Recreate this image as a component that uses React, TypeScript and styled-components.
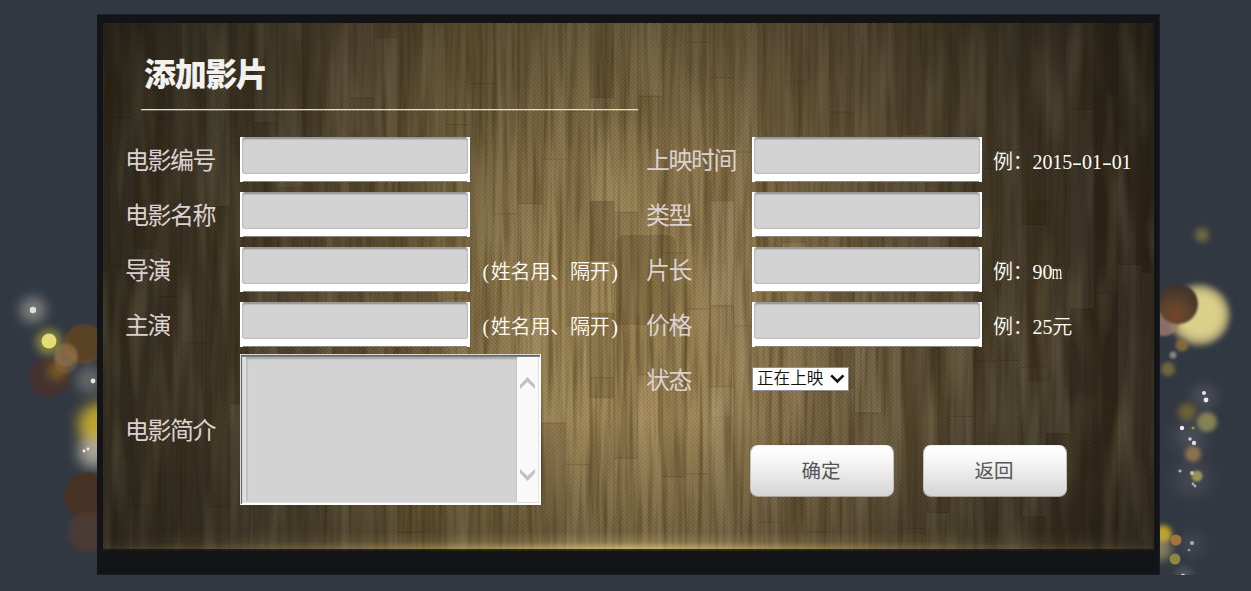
import React from 'react';
import styled, { createGlobalStyle } from 'styled-components';

const GlobalStyle = createGlobalStyle`
  * { box-sizing: border-box; }
  html, body { margin: 0; height: 591px; overflow: hidden; background: #323842; }
`;

const sans = `"Noto Sans CJK SC", sans-serif`;

const Page = styled.main`
  position: relative;
  height: 591px;
  padding: 14px 91px 16px 97px;
  background: #323842;
`;

const Lights = styled.svg`
  position: absolute;
  inset: 0;
`;

const Panel = styled.section`
  position: relative;
  height: 561px;
  padding: 8px 5px 24px 6px;
  background: #121418;
  border: 1px solid #1b1f24;
  border-left-width: 0;
`;

const Board = styled.div`
  position: relative;
  height: 528px;
  padding: 27px 0 0 22px;
`;

const WoodLayer = styled.svg`
  position: absolute;
  inset: 0;
`;

const Content = styled.form`
  position: relative;
`;

const Title = styled.h1`
  margin: 0 0 0 16px;
  width: 497px;
  height: 60px;
  padding: 0 0 0 3px;
  border-bottom: 1px solid #eadfd2;
  box-shadow: 0 1px 0 rgba(235, 220, 200, 0.3);
  color: #f3f1ee;
  font: 900 32px/45px ${sans};
  letter-spacing: -1.3px;
`;

const Columns = styled.div`
  display: grid;
  grid-template-columns: 521px 1fr;
  padding-top: 22px;
`;

const Row = styled.div<{ $tall?: boolean; $label: number }>`
  display: grid;
  grid-template-columns: ${(p) => p.$label}px max-content max-content;
  align-items: center;
  height: ${(p) => (p.$tall ? 155 : 55)}px;
`;

const Label = styled.label`
  padding-bottom: 2px;
  color: #dcd1d0;
  font: 400 24px/36px ${sans};
  letter-spacing: -1.5px;
  white-space: nowrap;
`;

const Frame = styled.div`
  width: 230px;
  height: 45px;
  padding: 0 2px;
  background: linear-gradient(#858585, #858585) 3px 44px / 224px 1px no-repeat #fff;
`;

const Input = styled.input`
  display: block;
  width: 226px;
  height: 37px;
  padding: 0 8px;
  border: 1px solid #bdbdbd;
  border-top-color: #999;
  outline: 0;
  border-radius: 3px;
  background: #d3d3d3;
  box-shadow: inset 0 1px 0 #9a9a9a, inset 0 2px 1px #bcbcbc, inset 0 0 1px #b4b4b4;
  font: 18px ${sans};
`;

const Hint = styled.span`
  display: flex;
  margin-left: 11px;
  padding-top: 5px;
  color: #fffdf6;
  font: 350 20px/28px "Liberation Serif", "Noto Sans CJK SC", serif;
  white-space: nowrap;
`;

const Cell = styled.span<{ $wide: boolean; $stretch: number }>`
  display: flex;
  justify-content: center;
  width: ${(p) => (p.$wide ? 19.8 : 9.9)}px;
  transform: scaleX(${(p) => p.$stretch});
`;

const AreaFrame = styled.div`
  display: flex;
  width: 301px;
  height: 151px;
  border: 1px solid;
  border-color: #d9dbdb #fff #fff #d9dbdb;
  box-shadow: inset 1px 1px 0 #62676a, inset 0 2px 0 #7d8183, inset -1px -1px 0 #fff, inset -2px -2px 0 #e2e2e2;
  padding: 2px;
  background: #d3d3d3;
`;

const Area = styled.textarea`
  flex: 1;
  height: 144px;
  padding: 6px;
  border: 0;
  border-left: 3px solid #e0e0e0;
  outline: 0;
  resize: none;
  background: #d3d3d3;
  box-shadow: inset 0 2px 2px #a6a6a6, inset 2px 0 1px #c6c6c6;
  font: 18px ${sans};
`;

const ScrollRail = styled.div`
  display: flex;
  flex-direction: column;
  justify-content: space-between;
  align-items: center;
  width: 21px;
  height: 145px;
  padding: 20px 0 21px;
  background: #f9f9f9;
`;

const Picker = styled.button`
  display: flex;
  align-items: center;
  width: 97px;
  height: 24px;
  margin-top: -1px;
  padding: 0 3px 0 4px;
  gap: 6px;
  border: 1px solid #8c9196;
  background: #fff;
  color: #111;
  font: 350 16.6px/20px ${sans};

  svg { margin-left: 1px; margin-top: -1px; }
  span { margin-top: -5px; white-space: nowrap; }
`;

const Actions = styled.div`
  display: flex;
  gap: 29px;
  margin: 38px 0 0 104px;
`;

const Action = styled.button`
  width: 144px;
  height: 52px;
  padding: 0 2px 2px 0;
  border: 1px solid #c3c1bd;
  border-top-color: #f4f4f4;
  border-bottom-color: #aaa69f;
  border-radius: 8px;
  background: linear-gradient(#fff 5%, #f4f4f4 35%, #d5d5d5);
  color: #555;
  font: 400 19.5px/26px ${sans};
`;

type Dot = [x: number, y: number, r: number, color: string, opacity: number, blur: number];

const dots: Dot[] = [
  [33, 310, 13, '#b8b2ac', 0.55, 6],
  [33, 310, 3.2, '#e9e4d8', 0.95, 0.6],
  [84, 344, 20, '#67471f', 0.75, 1],
  [49, 378, 20, '#46312d', 0.85, 1],
  [49, 342, 13, '#a8a43c', 0.7, 4],
  [49, 341, 7.5, '#e5dc74', 1, 0.6],
  [57, 371, 10, '#a37c16', 0.5, 4],
  [66, 355, 11.5, '#b38a50', 0.45, 0.8],
  [66, 361, 12, '#a27952', 0.35, 0.8],
  [90, 380, 14, '#aaa5a0', 0.4, 6],
  [93, 381, 2.4, '#efeae1', 0.95, 0.5],
  [100, 425, 22, '#d3b82c', 0.85, 7],
  [94, 452, 16, '#d4ccbf', 0.7, 7],
  [84, 451, 1.4, '#f5f0dc', 1, 0.3],
  [88, 449, 1.4, '#f5f0dc', 1, 0.3],
  [88, 496, 24, '#49311f', 0.85, 1],
  [88, 532, 20, '#573d31', 0.65, 2],
  [1202, 235, 7, '#8b7d43', 0.75, 3],
  [1199, 315, 30, '#bdb07b', 0.75, 3],
  [1200, 315, 25, '#e3d68d', 0.9, 4],
  [1164, 320, 16, '#9d7c70', 0.8, 1],
  [1182, 345, 6.5, '#96723a', 0.8, 1.5],
  [1173, 355, 3.5, '#9b9894', 0.8, 1],
  [1168, 369, 7, '#81733b', 0.8, 2],
  [1204, 397, 12, '#8a8b91', 0.28, 6],
  [1204, 393, 2, '#fff', 0.85, 0.5],
  [1206, 400, 2.4, '#fff', 0.9, 0.5],
  [1187, 412, 9, '#7c6b32', 0.8, 3],
  [1207, 422, 10, '#9a9558', 0.8, 2],
  [1190, 437, 15, '#85868e', 0.3, 8],
  [1182, 428, 2.2, '#fff', 0.9, 0.5],
  [1193, 428, 1.6, '#b5b943', 0.7, 0.4],
  [1190, 439, 1.7, '#fff', 0.75, 0.5],
  [1194, 443, 2.2, '#fff', 0.85, 0.5],
  [1193, 454, 8, '#aa8350', 0.75, 2],
  [1192, 478, 18, '#74757e', 0.25, 8],
  [1197, 476, 5.5, '#aba05a', 0.85, 1],
  [1180, 471, 1.6, '#ddd', 0.75, 0.5],
  [1192, 473, 2, '#ddd', 0.75, 0.5],
  [1193, 484, 1.4, '#ddd', 0.7, 0.4],
  [1195, 486, 1.4, '#ddd', 0.7, 0.4],
  [1163, 534, 9, '#d3b325', 0.85, 2.5],
  [1160, 549, 12, '#b9a668', 0.6, 4],
  [1176, 540, 5.5, '#ae7b3b', 0.9, 0.6],
  [1175, 559, 5.5, '#918b43', 0.95, 0.6],
  [1192, 545, 12, '#737780', 0.22, 6],
  [1192, 543, 2, '#d8dcdc', 0.7, 0.5],
  [1189, 550, 1.3, '#d8dcdc', 0.6, 0.4],
  [1184, 576, 9, '#9b9da3', 0.3, 4],
  [1183, 576, 2.2, '#fff', 0.8, 0.4],
];

function Bokeh() {
  return (
    <Lights width="1251" height="575" viewBox="0 0 1251 575" aria-hidden="true">
      <defs>
        <radialGradient id="amber" cx="42%" cy="78%" r="68%">
          <stop offset="0" stopColor="#75452a" />
          <stop offset="0.5" stopColor="#5d432c" />
          <stop offset="1" stopColor="#42352a" />
        </radialGradient>
      </defs>
      {dots.map(([x, y, r, color, opacity, blur], i) => (
        <circle key={i} cx={x} cy={y} r={r} fill={color} opacity={opacity} style={{ filter: `blur(${blur}px)` }} />
      ))}
      <circle cx="1178" cy="304" r="20" fill="url(#amber)" style={{ filter: 'blur(0.8px)' }} />
    </Lights>
  );
}

const rand = (n: number) => {
  const v = Math.sin(n * 127.1 + 11.7) * 43758.5453;
  return v - Math.floor(v);
};

type Plank = { x: number; y: number; w: number; h: number; tone: number };

const planks: Plank[] = [];
for (let c = 0; c < 45; c += 1) {
  let y = -rand(c + 3) * 190;
  let k = 0;
  while (y < 528) {
    const h = 130 + rand(c * 13 + k * 7) * 190;
    planks.push({ x: c * 24 - 17, y, w: 24, h, tone: rand(c * 31 + k * 17 + 5) - 0.5 });
    y += h;
    k += 1;
  }
}
planks.push(
  { x: 487, y: 178, w: 24, h: 60, tone: -0.9 },
  { x: 487, y: 290, w: 24, h: 85, tone: -0.6 },
  { x: 607, y: 178, w: 24, h: 104, tone: 1.4 },
  { x: 607, y: 284, w: 24, h: 110, tone: 0.6 },
  { x: 924, y: 178, w: 24, h: 180, tone: -0.7 },
  { x: 752, y: 240, w: 26, h: 150, tone: 0.9 },
);

function Wood() {
  return (
    <WoodLayer width="1051" height="528" viewBox="0 0 1051 528" aria-hidden="true">
      <defs>
        <linearGradient id="base">
          <stop offset="0" stopColor="#2e281d" />
          <stop offset="0.1" stopColor="#3d3627" />
          <stop offset="0.2" stopColor="#544832" />
          <stop offset="0.3" stopColor="#6f5e3b" />
          <stop offset="0.4" stopColor="#8f794e" />
          <stop offset="0.52" stopColor="#9c8557" />
          <stop offset="0.62" stopColor="#8b744e" />
          <stop offset="0.72" stopColor="#69583c" />
          <stop offset="0.85" stopColor="#463d2b" />
          <stop offset="0.94" stopColor="#31291e" />
          <stop offset="1" stopColor="#282118" />
        </linearGradient>
        <radialGradient id="spot" gradientUnits="userSpaceOnUse" cx="0" cy="0" r="1" gradientTransform="translate(535 290) scale(230 260)">
          <stop offset="0" stopColor="#d0b070" stopOpacity="0.34" />
          <stop offset="1" stopColor="#d0b070" stopOpacity="0" />
        </radialGradient>
        <linearGradient id="shade" x2="0" y2="1">
          <stop offset="0" stopColor="#17140e" stopOpacity="0.38" />
          <stop offset="0.28" stopColor="#17140e" stopOpacity="0.1" />
          <stop offset="0.75" stopColor="#17140e" stopOpacity="0" />
          <stop offset="1" stopColor="#17140e" stopOpacity="0.3" />
        </linearGradient>
        <linearGradient id="rim">
          <stop offset="0" stopColor="#b99f63" stopOpacity="0.1" />
          <stop offset="0.2" stopColor="#c9ad70" stopOpacity="0.4" />
          <stop offset="0.5" stopColor="#e8cb88" stopOpacity="0.9" />
          <stop offset="0.8" stopColor="#c9ad70" stopOpacity="0.35" />
          <stop offset="1" stopColor="#b99f63" stopOpacity="0.1" />
        </linearGradient>
        <linearGradient id="rimFade" x2="0" y2="1">
          <stop offset="0" stopColor="#fff" stopOpacity="0" />
          <stop offset="0.6" stopColor="#fff" stopOpacity="0.25" />
          <stop offset="1" stopColor="#fff" stopOpacity="0.85" />
        </linearGradient>
        <mask id="rimMask">
          <rect y="508" width="1051" height="18" fill="url(#rimFade)" />
        </mask>
        <filter id="grain" x="0" y="0" width="100%" height="100%" colorInterpolationFilters="sRGB">
          <feTurbulence type="fractalNoise" baseFrequency="0.2 0.008" numOctaves="3" seed="8" />
          <feColorMatrix values="0 0 0 0 0.18  0 0 0 0 0.12  0 0 0 0 0.02  2.2 0 0 0 -0.92" />
        </filter>
        <filter id="shine" x="0" y="0" width="100%" height="100%" colorInterpolationFilters="sRGB">
          <feTurbulence type="fractalNoise" baseFrequency="0.06 0.008" numOctaves="2" seed="21" />
          <feColorMatrix values="0 0 0 0 0.78  0 0 0 0 0.73  0 0 0 0 0.56  0 1.7 0 0 -0.75" />
        </filter>
        <pattern id="mesh" width="4" height="4" patternUnits="userSpaceOnUse">
          <rect width="1" height="1" fill="#000" />
          <rect x="2" y="2" width="1" height="1" fill="#000" />
          <rect x="2" width="1" height="1" fill="#b5aa8a" opacity="0.6" />
          <rect y="2" width="1" height="1" fill="#b5aa8a" opacity="0.6" />
        </pattern>
      </defs>
      <rect width="1051" height="528" fill="url(#base)" />
      <rect width="1051" height="528" fill="url(#spot)" />
      {planks.map((p, i) => (
        <rect
          key={i}
          x={p.x}
          y={p.y}
          width={p.w}
          height={p.h}
          fill={p.tone < 0 ? '#2a1a04' : '#d8cda8'}
          fillOpacity={Math.abs(p.tone) * (p.tone < 0 ? 0.3 : 0.15)}
          stroke="#241807"
          strokeOpacity="0.09"
        />
      ))}
      <path d="M513 302V222Q513 212 523 212H563Q573 212 573 222V302Z" fill="#3a2c10" opacity="0.22" />
      <rect width="1051" height="528" filter="url(#grain)" opacity="0.42" />
      <rect width="1051" height="528" filter="url(#shine)" opacity="0.3" />
      <rect width="1051" height="528" fill="url(#shade)" />
      <rect width="1051" height="528" fill="url(#mesh)" opacity="0.15" />
      <rect y="508" width="1051" height="18" fill="url(#rim)" mask="url(#rimMask)" />
      <rect y="526" width="1051" height="2" fill="#17130d" opacity="0.7" />
    </WoodLayer>
  );
}

const glyphStretch: Record<string, number> = { m: 0.68, '-': 1.5 };

function HintText({ text }: { text: string }) {
  return (
    <Hint>
      {Array.from(text).map((ch, i) => (
        <Cell key={i} $wide={ch.charCodeAt(0) > 255} $stretch={glyphStretch[ch] ?? 1}>
          {ch}
        </Cell>
      ))}
    </Hint>
  );
}

function Field({ label, hint, side }: { label: string; hint?: string; side: 'left' | 'right' }) {
  return (
    <Row $label={side === 'left' ? 115 : 106}>
      <Label>{label}</Label>
      <Frame>
        <Input aria-label={label} />
      </Frame>
      {hint && <HintText text={hint} />}
    </Row>
  );
}

export default function App() {
  return (
    <>
      <GlobalStyle />
      <Page>
        <Bokeh />
        <Panel>
          <Board>
            <Wood />
            <Content>
              <Title>添加影片</Title>
              <Columns>
                <div>
                  <Field side="left" label="电影编号" />
                  <Field side="left" label="电影名称" />
                  <Field side="left" label="导演" hint="(姓名用、隔开)" />
                  <Field side="left" label="主演" hint="(姓名用、隔开)" />
                  <Row $label={115} $tall>
                    <Label>电影简介</Label>
                    <AreaFrame>
                      <Area aria-label="电影简介" />
                      <ScrollRail>
                        <svg width="15" height="12" viewBox="0 0 15 12">
                          <path d="M0 8 7.5 0 15 8V12L7.5 5 0 12Z" fill="#c1c1c1" />
                        </svg>
                        <svg width="15" height="12" viewBox="0 0 15 12">
                          <path d="M0 0 7.5 7 15 0V4L7.5 12 0 4Z" fill="#c1c1c1" />
                        </svg>
                      </ScrollRail>
                    </AreaFrame>
                  </Row>
                </div>
                <div>
                  <Field side="right" label="上映时间" hint="例：2015-01-01" />
                  <Field side="right" label="类型" />
                  <Field side="right" label="片长" hint="例：90m" />
                  <Field side="right" label="价格" hint="例：25元" />
                  <Row $label={106}>
                    <Label>状态</Label>
                    <Picker type="button">
                      <span>正在上映</span>
                      <svg width="15" height="10" viewBox="0 0 15 10">
                        <path d="M1.2 1.3 7.5 7.5 13.8 1.3" fill="none" stroke="#111" strokeWidth="2.6" />
                      </svg>
                    </Picker>
                  </Row>
                  <Actions>
                    <Action type="button">确定</Action>
                    <Action type="button">返回</Action>
                  </Actions>
                </div>
              </Columns>
            </Content>
          </Board>
        </Panel>
      </Page>
    </>
  );
}
